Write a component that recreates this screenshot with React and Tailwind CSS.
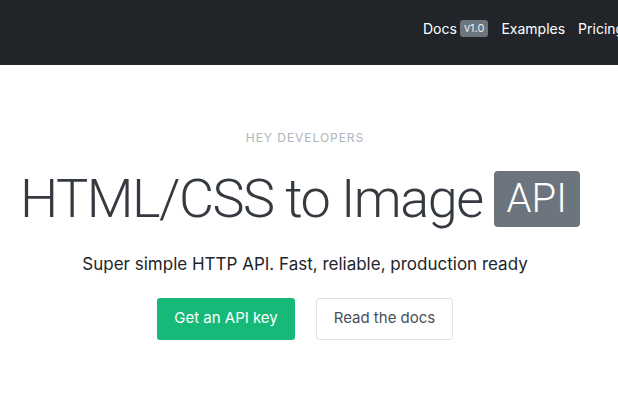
export default function App() {
  return (
    <div className="w-[618px] h-[394px] overflow-hidden bg-white" style={{ fontFamily: "Inter, 'Liberation Sans', sans-serif" }}>
      <nav className="h-[65px] bg-[#212529] flex items-center overflow-hidden whitespace-nowrap pl-[423px] pb-[8px]">
        <div className="flex items-center gap-[13px] text-[14px] text-white shrink-0">
          <span className="flex items-center gap-[3px]">
            Docs
            <span className="bg-[#6c757d] text-[#e9ecef] text-[11px] leading-none px-[4px] py-[3px] rounded-[3px]">v1.0</span>
          </span>
          <span>Examples</span>
          <span>Pricing</span>
          <span>Login</span>
        </div>
      </nav>
      <main className="flex flex-col items-center pt-[67px]">
        <div className="text-[12px] tracking-[0.08em] text-[#adb5bd] leading-none -ml-[8px]">HEY DEVELOPERS</div>
        <h1 className="mt-[27px] flex items-center gap-[11px] text-[#343a40] leading-none -ml-[18px]" style={{ fontFamily: "Roboto, 'Liberation Sans', sans-serif" }}>
          <span className="text-[54px] font-light tracking-[-1.5px]">HTML/CSS to Image</span>
          <span className="bg-[#6c757d] text-white text-[40px] font-light rounded-[4px] px-[13px] h-[56px] flex items-center">API</span>
        </h1>
        <p className="mt-[25px] text-[17px] text-[#212529] -ml-[8px]">Super simple HTTP API. Fast, reliable, production ready</p>
        <div className="mt-[20px] flex gap-[21px] -ml-[8px]">
          <button className="w-[138px] h-[42px] rounded-[3px] bg-[#17b978] text-white text-[15px]">Get an API key</button>
          <button className="w-[137px] h-[42px] rounded-[3px] border border-[#dee2e6] bg-white text-[#495057] text-[15px]">Read the docs</button>
        </div>
      </main>
    </div>
  );
}
